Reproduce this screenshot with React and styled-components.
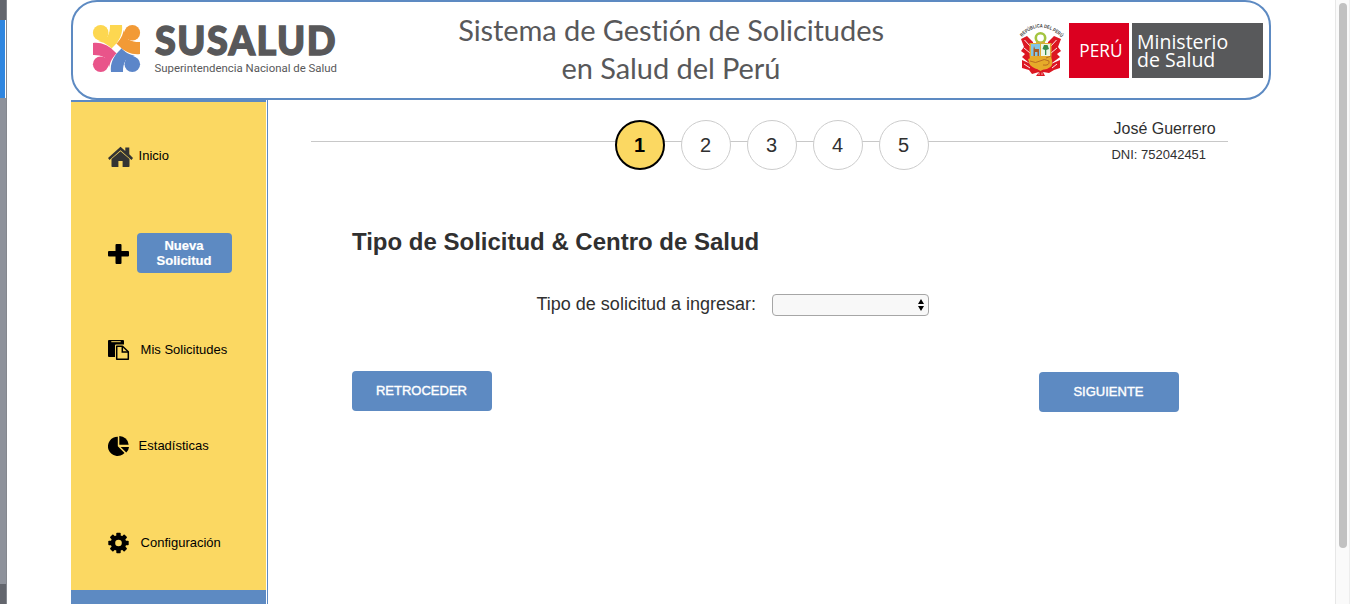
import React from "react";
import styled, { createGlobalStyle } from "styled-components";

const blue = "#5d8ac2";
const yellow = "#fbd862";

const GlobalStyle = createGlobalStyle`
  *, *::before, *::after { box-sizing: border-box; }
  body { margin: 0; background: #fff; font-family: "Liberation Sans", Arial, sans-serif; color: #303030; overflow: hidden; }
`;

const Screen = styled.div`
  display: flex;
  height: 604px;
  width: 1350px;
`;

const DesktopEdge = styled.div`
  display: flex;
  flex-direction: column;
  width: 7px;
  margin-right: 64px;
  border-right: 1px solid #85888f;
`;

const EdgePart = styled.div`
  height: ${(p) => p.$height}px;
  background: ${(p) => p.$color};
  border-right: ${(p) => (p.$inset ? "1px solid #fff" : "none")};
`;

const Page = styled.div`
  width: 1200px;
  display: flex;
  flex-direction: column;
`;

const Header = styled.header`
  height: 100px;
  flex: none;
  border: 2px solid ${blue};
  border-radius: 26px;
  display: flex;
  padding: 21px 6px 0 20px;
`;

const Title = styled.h1`
  margin: -12px 0 0 110px;
  font: 400 29px/38px Lato, sans-serif;
  letter-spacing: -0.07px;
  color: #58585a;
  text-align: center;
  white-space: nowrap;
  width: 440px;
`;

const SusaludLogo = styled.svg`
  width: 248px;
  height: 54px;
  flex: none;
  overflow: visible;
`;

const Ministry = styled.div`
  display: flex;
  height: 55px;
  margin-left: auto;
  font-family: "Open Sans", sans-serif;
  color: #fff;
`;

const Crest = styled.svg`
  width: 46px;
  height: 56px;
  margin-right: 4px;
  overflow: visible;
`;

const Country = styled.div`
  width: 60px;
  margin-right: 3px;
  background: #db0020;
  font-size: 17.3px;
  line-height: 55px;
  text-align: center;
  padding-left: 4px;
`;

const Department = styled.div`
  width: 131px;
  background: #58595b;
  font-size: 19.5px;
  line-height: 18px;
  padding: 10px 0 0 5px;
  white-space: nowrap;
`;

const Body = styled.div`
  display: flex;
  flex: 1;
  min-height: 0;
`;

const Sidebar = styled.nav`
  width: 195px;
  border-top: 2px solid ${blue};
  border-bottom: 14px solid ${blue};
  background: ${yellow};
  padding: 6px 0 0 37px;
`;

const NavItem = styled.div`
  height: 96.6px;
  display: flex;
  align-items: center;
  color: #000;
`;

const NavText = styled.span`
  font-size: 13px;
  line-height: 16px;
  margin-left: -0.4px;
  padding-top: ${(p) => p.$drop || 0}px;
`;

const NavIcon = styled.svg`
  width: ${(p) => p.$width || 22}px;
  height: 22px;
  flex: none;
  margin-top: ${(p) => p.$drop || 0}px;
  margin-right: ${(p) => p.$gap}px;
`;

const NewRequest = styled.button`
  width: 95px;
  height: 40px;
  border: 0;
  border-radius: 4px;
  background: ${blue};
  color: #fff;
  font: 700 13px/15px "Liberation Sans", Arial, sans-serif;
  -webkit-text-stroke: 0.2px #fff;
  padding: 0 13px 0 12px;
  margin-top: 1px;
`;

const Main = styled.main`
  flex: 1;
  margin-left: 1px;
  border-left: 1px solid ${blue};
  padding: 20px 0 0 43px;
`;

const Progress = styled.div`
  display: flex;
  gap: 16px;
  width: 917px;
  height: 50px;
  padding-left: 304px;
  background: linear-gradient(#c8c8c8, #c8c8c8) 0 21px / 100% 1px no-repeat;
`;

const Step = styled.div`
  width: 50px;
  height: 50px;
  flex: none;
  border-radius: 50%;
  border: ${(p) => (p.$active ? "2px solid #000" : "1px solid #ccc")};
  background: ${(p) => (p.$active ? yellow : "#fff")};
  color: ${(p) => (p.$active ? "#000" : "#303030")};
  font-size: 20px;
  font-weight: ${(p) => (p.$active ? 700 : 400)};
  display: flex;
  align-items: center;
  justify-content: center;
  padding-right: 1px;
`;

const User = styled.div`
  margin-left: 166px;
  white-space: nowrap;
`;

const UserName = styled.div`
  font-size: 16px;
  line-height: 18px;
  padding-left: 2.5px;
`;

const UserId = styled.div`
  font-size: 13px;
  line-height: 16px;
  margin-top: 9px;
  padding-left: 0.4px;
`;

const Form = styled.section`
  width: 827px;
  margin: 58px 0 0 41px;
`;

const Heading = styled.h2`
  margin: 0;
  font-size: 24px;
  line-height: 28px;
  letter-spacing: -0.01px;
`;

const Field = styled.label`
  display: flex;
  align-items: center;
  justify-content: space-between;
  width: 392px;
  margin: 38px 0 0 185px;
  height: 22px;
  white-space: nowrap;
`;

const FieldName = styled.span`
  font-size: 18px;
  line-height: 20px;
  padding-bottom: 2px;
  margin-left: -0.5px;
`;

const Picker = styled.div`
  width: 157px;
  height: 22px;
  border: 1px solid #a6a6a6;
  border-radius: 4px;
  background: #f8f8f8;
  display: flex;
  justify-content: flex-end;
  align-items: center;
  padding-right: 4px;
`;

const Actions = styled.div`
  display: flex;
  justify-content: space-between;
  margin-top: 55px;
`;

const ActionButton = styled.button`
  width: 140px;
  height: 40px;
  margin-top: ${(p) => p.$drop || 0}px;
  border: 0;
  border-radius: 4px;
  background: ${blue};
  color: #fff;
  font: 400 13px "Liberation Sans", Arial, sans-serif;
  -webkit-text-stroke: 0.4px #fff;
  padding: 0 1px 1px 0;
`;

const ScrollTrack = styled.div`
  width: 15px;
  margin-left: auto;
  background: #fafafa;
  border-left: 1px solid #e7e7e7;
  border-right: 1px solid #ededed;
  padding: 3px 2px 0 3px;
`;

const ScrollThumb = styled.div`
  width: 8px;
  height: 545px;
  border-radius: 4px;
  background: #c1c1c1;
`;

const petals = [
  { angle: 0, color: "#fdd750" },
  { angle: 90, color: "#f29a36" },
  { angle: 180, color: "#5c86c9" },
  { angle: 270, color: "#e9548a" },
];

function Susalud() {
  return (
    <SusaludLogo viewBox="0 0 248 54">
      <g transform="translate(23.5 25.5)">
        {petals.map((p) => (
          <g key={p.angle} transform={`rotate(${p.angle})`} fill={p.color}>
            <circle cx="-15.8" cy="-15.8" r="7.8" />
            <path d="M-6.5-23.5H5.5C6.5-15 3-9-0.5-4.5L-4.8 0.2C-9-4.2-13-6-18.5-7.4L-9-12C-7-16-6.4-19-6.5-23.5Z" />
          </g>
        ))}
        <path d="M0-4.8L4.8 0L0 4.8L-4.8 0Z" fill="#fff" />
      </g>
      <text x="62" y="32" fontFamily="Lato, sans-serif" fontWeight="900" fontSize="39.5" letterSpacing="1.5" fill="#58585a" stroke="#58585a" strokeWidth="1.4" textLength="182" lengthAdjust="spacingAndGlyphs">SUSALUD</text>
      <text x="61.5" y="49" fontFamily="Roboto, sans-serif" fontSize="11.6" fill="#58585a" textLength="182.5" lengthAdjust="spacingAndGlyphs">Superintendencia Nacional de Salud</text>
    </SusaludLogo>
  );
}

function PeruCrest() {
  return (
    <Crest viewBox="0 0 46 56">
      <defs>
        <path id="arc" d="M3 14Q21-5 42 14" />
      </defs>
      <text fontFamily="Liberation Sans, sans-serif" fontSize="5" fontWeight="700" fill="#444">
        <textPath href="#arc" textLength="45" lengthAdjust="spacingAndGlyphs">REPÚBLICA DEL PERÚ</textPath>
      </text>
      <g fill="#dc1722">
        <path d="M2 16L8 13L14 19L15 38L10 40L3 34L6 31L2 28L5 24Z" />
        <path d="M42 16L35 13L29 19L28 38L33 40L41 34L38 31L42 28L39 24Z" />
        <path d="M3 37L12 41L17 45H27L32 41L41 37V45L35 47L30 50L24 49L26 53H17L20 49L13 51L10 47L3 45Z" />
      </g>
      <g stroke="#fff" strokeWidth="0.9" fill="none">
        <path d="M5.5 17L11 23M5 25L11 30M37.5 17L32 23M38 25L32 30M5 41L11 45M38 41L33 45" />
      </g>
      <path d="M10.5 20H32.5V32Q33 43 21.5 48Q10 43 10.5 32Z" fill="#e2ad35" />
      <path d="M12 21H21V33H12Z" fill="#82c5e5" />
      <path d="M22 21H31V33H22Z" fill="#edf5e5" />
      <path d="M15 23L16 26H20V33H18.5V29H16V33H14.5V26Z" fill="#a95c24" />
      <path d="M26 32V27L23.5 26L25 22H28.5L30 26L27.3 27V32Z" fill="#398c4b" />
      <path d="M9 36Q20 31 32 34Q36 43 28 46Q17 48 11 42Z" fill="#e6ab29" />
      <path d="M11 38Q17 41 21 38T30 38Q31 43 24 42M27 35L32 33" fill="none" stroke="#b3641f" strokeWidth="0.9" />
      <circle cx="21.5" cy="15" r="4.7" fill="#fff" stroke="#a3c43f" strokeWidth="2.6" />
      <path d="M17 19.5H26" stroke="#d8ae39" strokeWidth="1.5" />
      <path d="M20 49.5V52M23 49.5V52" stroke="#fff" strokeWidth="0.6" />
    </Crest>
  );
}

function HomeIcon() {
  return (
    <NavIcon $width={25} $gap={6} $drop={1} viewBox="0 0 25 22" fill="#333">
      <path d="M12.5 0.8L17.3 5V1.6H21.3V8.3L25 12L23.5 13.9L12.5 4.3L1.5 13.9L0 12Z" />
      <path d="M12.5 5.2L21.5 13V20.2Q21.5 21 20.7 21H14.6V15H10.4V21H4.3Q3.5 21 3.5 20.2V13Z" />
    </NavIcon>
  );
}

function PlusIcon() {
  return (
    <NavIcon $gap={7} $drop={2} viewBox="0 0 22 22">
      <path d="M9 1H12.5Q13.5 1 13.5 2V8H20Q21 8 21 9V12.5Q21 13.5 20 13.5H13.5V20Q13.5 21 12.5 21H8.5Q7.5 21 7.5 20V13.5H1Q0 13.5 0 12.5V9Q0 8 1 8H7.5V2Q7.5 1 8.5 1Z" />
    </NavIcon>
  );
}

function PasteIcon() {
  return (
    <NavIcon $gap={11} $drop={1} viewBox="0 0 22 22">
      <path d="M1 1H15Q16 1 16 2V5.5H8Q7 5.5 7 6.5V18H1Q0 18 0 17V2Q0 1 1 1Z" />
      <path d="M3.3 2.7H12.7" stroke={yellow} strokeWidth="1" />
      <path d="M8.7 7.2H14.5L20.3 12.8V20.2H8.7Z" fill={yellow} stroke="#000" strokeWidth="1.5" strokeLinejoin="round" />
      <path d="M14.3 7.2V13H20.3" fill="none" stroke="#000" strokeWidth="1.5" />
    </NavIcon>
  );
}

function PieIcon() {
  return (
    <NavIcon $gap={9} viewBox="0 0 22 22">
      <path d="M9.8 1.8V11.2L16.5 18A9.6 9.6 0 1 1 9.8 1.8Z" />
      <path d="M11.3 1A9.6 9.6 0 0 1 20.7 9.8H11.3Z" />
      <path d="M12.6 11.9H21A9 9 0 0 1 18.3 17.5Z" />
    </NavIcon>
  );
}

function GearIcon() {
  return (
    <NavIcon $gap={11} viewBox="0 0 22 22">
      {[0, 45, 90, 135].map((a) => (
        <rect key={a} x="8.3" y="0.8" width="4.4" height="20.4" rx="0.8" transform={`rotate(${a} 10.5 11)`} />
      ))}
      <circle cx="10.5" cy="11" r="7.8" />
      <circle cx="10.5" cy="11" r="3.3" fill={yellow} />
    </NavIcon>
  );
}

export default function App() {
  return (
    <>
      <GlobalStyle />
      <Screen>
        <DesktopEdge>
          <EdgePart $height={20} $color="#63666d" />
          <EdgePart $height={78} $color="#2f86e0" $inset />
          <EdgePart $height={486} $color="#8e929b" />
          <EdgePart $height={20} $color="#63666d" />
        </DesktopEdge>
        <Page>
          <Header>
            <Susalud />
            <Title>Sistema de Gestión de Solicitudes<br />en Salud del Perú</Title>
            <Ministry>
              <PeruCrest />
              <Country>PERÚ</Country>
              <Department>Ministerio<br />de Salud</Department>
            </Ministry>
          </Header>
          <Body>
            <Sidebar>
              <NavItem><HomeIcon /><NavText>Inicio</NavText></NavItem>
              <NavItem><PlusIcon /><NewRequest>Nueva Solicitud</NewRequest></NavItem>
              <NavItem><PasteIcon /><NavText $drop={1.5}>Mis Solicitudes</NavText></NavItem>
              <NavItem><PieIcon /><NavText>Estadísticas</NavText></NavItem>
              <NavItem><GearIcon /><NavText>Configuración</NavText></NavItem>
            </Sidebar>
            <Main>
              <Progress>
                {[1, 2, 3, 4, 5].map((n) => (
                  <Step key={n} $active={n === 1}>{n}</Step>
                ))}
                <User>
                  <UserName>José Guerrero</UserName>
                  <UserId>DNI: 752042451</UserId>
                </User>
              </Progress>
              <Form>
                <Heading>Tipo de Solicitud &amp; Centro de Salud</Heading>
                <Field>
                  <FieldName>Tipo de solicitud a ingresar:</FieldName>
                  <Picker>
                    <svg width="6" height="12" viewBox="0 0 6 12">
                      <path d="M0 5L3 0L6 5ZM0 7H6L3 12Z" />
                    </svg>
                  </Picker>
                </Field>
                <Actions>
                  <ActionButton>RETROCEDER</ActionButton>
                  <ActionButton $drop={1}>SIGUIENTE</ActionButton>
                </Actions>
              </Form>
            </Main>
          </Body>
        </Page>
        <ScrollTrack>
          <ScrollThumb />
        </ScrollTrack>
      </Screen>
    </>
  );
}
